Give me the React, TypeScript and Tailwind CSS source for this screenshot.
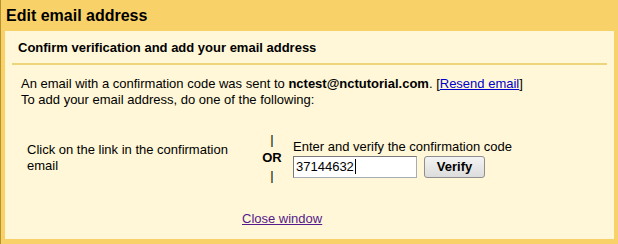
import React from "react";

const font = "font-['Liberation_Sans',Arial,sans-serif]";

export default function App() {
  return (
    <div
      className={`${font} flex h-[244px] w-[618px] flex-col border-l border-[#b8922f] bg-[#f8d268] pb-[5px] pl-[4px] pr-[4px] text-[13px] text-black`}
    >
      {/* title bar */}
      <div className="flex h-[31px] items-center pl-[1px] text-[16px] font-bold leading-none">
        Edit email address
      </div>

      {/* panel */}
      <div className="flex flex-1 flex-col bg-[#fff7d7] pl-[7px] pr-[7px]">
        <div className="pl-[6px] pt-[9px] text-[13px] font-bold leading-[15px]">
          Confirm verification and add your email address
        </div>
        <div className="mt-[8px] h-[2px] bg-[#edd57b]" />

        <div className="pl-[9px] pt-[11px] leading-[16px]">
          <div>
            An email with a confirmation code was sent to{" "}
            <span className="font-bold">nctest@nctutorial.com</span>. [
            <a className="text-[#0000cc] underline">Resend email</a>]
          </div>
          <div>To add your email address, do one of the following:</div>
        </div>

        <div className="mt-[23px] flex items-center pl-[15px]">
          <div className="w-[228px] leading-[16px]">
            Click on the link in the confirmation email
          </div>
          <div className="flex w-[34px] flex-col items-center font-bold leading-[18px]">
            <span className="font-normal">|</span>
            <span>OR</span>
            <span className="font-normal">|</span>
          </div>
          <div className="pl-[4px]">
            <div className="leading-[16px]">Enter and verify the confirmation code</div>
            <div className="mt-[1px] flex items-center gap-[7px]">
              <div className="flex h-[22px] w-[124px] items-center border border-[#a5acb5] border-t-[#7a7a7a] border-l-[#7a7a7a] bg-white pl-[2px]">
                <span>37144632</span>
                <span className="ml-[1px] h-[15px] w-[1px] bg-black" />
              </div>
              <button className="h-[22px] w-[61px] rounded-[3px] border border-[#8e8f8f] bg-gradient-to-b from-[#f4f4f4] to-[#dcdcdc] text-[13px] font-bold">
                Verify
              </button>
            </div>
          </div>
        </div>

        <div className="mt-[24px] pl-[230px]">
          <a className="text-[#551a8b] underline">Close window</a>
        </div>
      </div>
    </div>
  );
}
